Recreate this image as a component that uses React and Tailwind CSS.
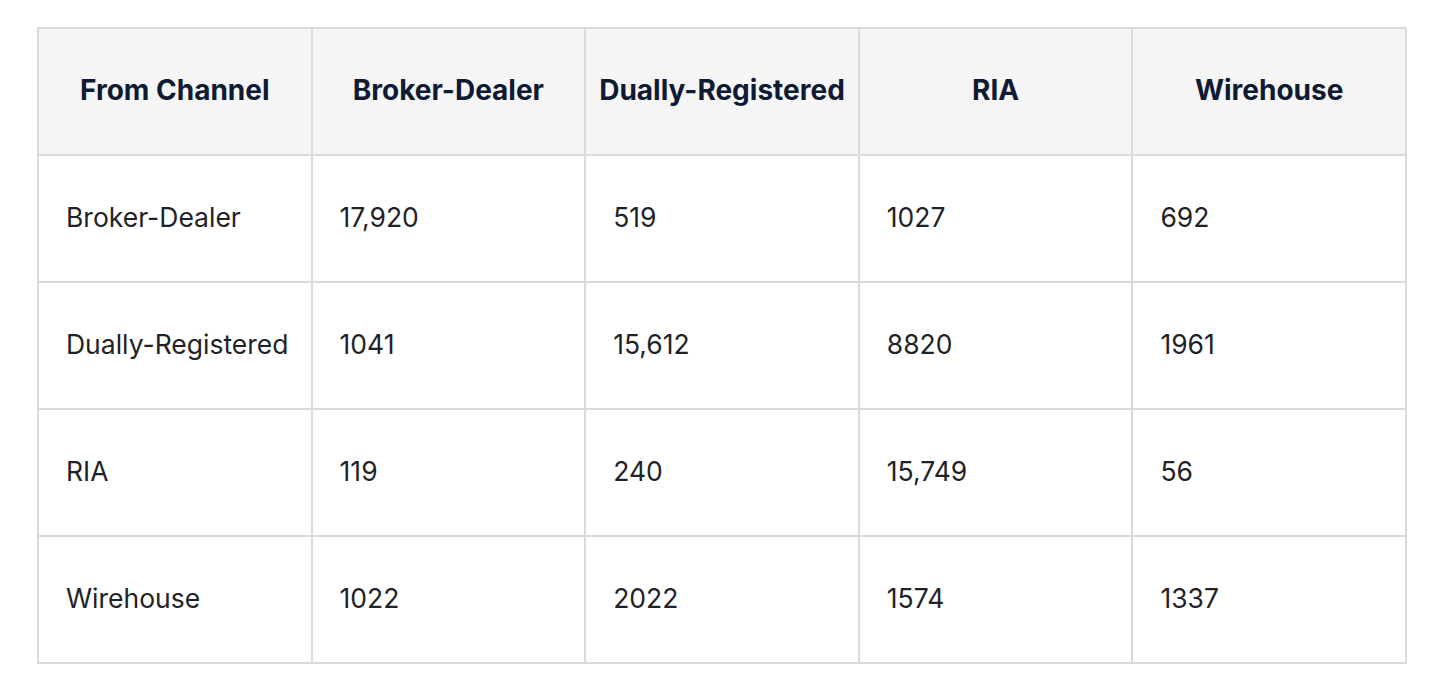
export default function App() {
  const headers = ["From Channel", "Broker-Dealer", "Dually-Registered", "RIA", "Wirehouse"];
  const rows = [
    ["Broker-Dealer", "17,920", "519", "1027", "692"],
    ["Dually-Registered", "1041", "15,612", "8820", "1961"],
    ["RIA", "119", "240", "15,749", "56"],
    ["Wirehouse", "1022", "2022", "1574", "1337"],
  ];
  return (
    <div className="w-[1450px] h-[690px] bg-white pl-[37px] pt-[27px]" style={{ fontFamily: "Inter, 'Noto Sans', sans-serif" }}>
      <table className="w-[1370px] border-collapse table-fixed border-2 border-[#dadada]">
        <thead>
          <tr className="h-[127px] bg-[#f5f5f5]">
            {headers.map((h) => (
              <th key={h} className="border-2 border-[#dadada] px-1 pb-[4px] text-center align-middle text-[28px] font-bold text-[#0f1b33]">
                {h}
              </th>
            ))}
          </tr>
        </thead>
        <tbody>
          {rows.map((r, i) => (
            <tr key={i} className="h-[127px] bg-white">
              {r.map((c, j) => (
                <td key={j} className="border-2 border-[#dadada] pl-[27px] pr-2 pb-[2px] text-left align-middle text-[26.5px] text-[#1f2328]">
                  {c}
                </td>
              ))}
            </tr>
          ))}
        </tbody>
      </table>
    </div>
  );
}
